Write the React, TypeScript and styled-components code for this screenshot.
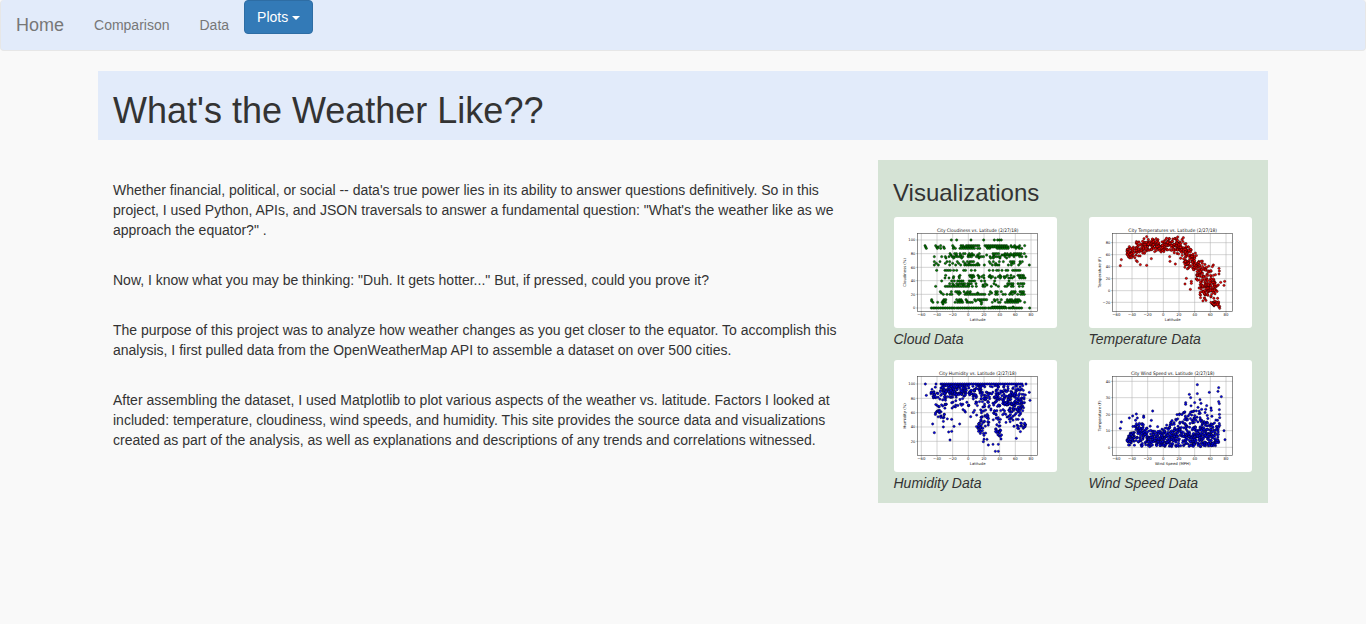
import React from "react";
import styled, { createGlobalStyle } from "styled-components";

const GlobalStyle = createGlobalStyle`
  * { box-sizing: border-box; }
  body {
    margin: 0;
    background: #f9f9f9;
    color: #333;
    font: 14px/20px "Liberation Sans", Arial, sans-serif;
  }
`;

const Navbar = styled.nav`
  display: flex;
  align-items: flex-start;
  height: 51px;
  margin-bottom: 20px;
  background: #e2ebfa;
  border: 1px solid #e7e7e7;
  border-top: 0;
  border-radius: 4px;
`;

const NavLink = styled.a<{ $brand?: boolean }>`
  padding: 15px;
  color: #777;
  font-size: ${(p) => (p.$brand ? 18 : 14)}px;
  line-height: 20px;
  text-decoration: none;
`;

const DropdownButton = styled.button`
  display: flex;
  align-items: center;
  gap: 4px;
  padding: 6px 12px;
  background: #337ab7;
  border: 1px solid #2e6da4;
  border-radius: 4px;
  color: #fff;
  font: inherit;
`;

const Caret = styled.span`
  margin-top: 1px;
  border-top: 4px solid #fff;
  border-right: 4px solid transparent;
  border-left: 4px solid transparent;
`;

const Container = styled.div`
  width: 1170px;
  margin: 0 auto;
`;

const Header = styled.header`
  display: flow-root;
  margin-bottom: 20px;
  padding: 0 15px;
  background: #e2ebfa;
`;

const PageTitle = styled.h1`
  margin: 20px 0 10px;
  font-size: 36px;
  font-weight: 400;
  line-height: 39px;
`;

const Columns = styled.div`
  display: grid;
  grid-template-columns: 780px 390px;
  align-items: start;
`;

const Article = styled.main`
  padding: 20px 40px 0 15px;
`;

const Paragraph = styled.p`
  margin: 0 0 30px;
`;

const Sidebar = styled.aside`
  display: flow-root;
  padding: 0 15px 10.4px;
  background: #d5e3d5;
`;

const SidebarTitle = styled.h3`
  margin: 20px 0 11px;
  font-size: 24px;
  font-weight: 400;
  line-height: 26px;
`;

const Gallery = styled.div`
  display: grid;
  grid-template-columns: 165px 165px;
  column-gap: 30px;
  row-gap: 11.3px;
`;

const Figure = styled.figure`
  margin: 0;
`;

const Thumbnail = styled.svg`
  display: block;
  width: 163px;
  height: 111.33px;
  margin: 0 1px;
  background: #fff;
  border-radius: 3px;
`;

const Caption = styled.figcaption`
  padding: 0.8px 0 0 0.5px;
  font-style: italic;
  line-height: 20px;
`;

const Label = styled.text`
  fill: #111;
  font-family: "DejaVu Sans", sans-serif;
`;

type Point = [number, number];
/** x start, x end, top and bottom at the start, top and bottom at the end, count */
type Band = [number, number, number, number, number, number, number];

function makeRandom(seed: number) {
  let s = seed;
  return () => {
    s = (s * 1664525 + 1013904223) % 4294967296;
    return s / 4294967296;
  };
}

/** Points gather round the middle of each band and thin out past its edges. */
function scatter(bands: Band[], seed: number, minY: number, maxY: number): Point[] {
  const random = makeRandom(seed);
  return bands.flatMap(([x0, x1, t0, b0, t1, b1, n]) =>
    Array.from({ length: n }, (): Point => {
      const k = random();
      const top = t0 + (t1 - t0) * k;
      const bottom = b0 + (b1 - b0) * k;
      const u = (random() + random()) * 0.68 - 0.18;
      const x = x0 + (x1 - x0) * k + (random() - 0.5) * 10;
      const y = Math.min(maxY - random() * 5, Math.max(minY + random() * 5, top + (bottom - top) * u));
      return [Math.min(x, 407), y];
    })
  );
}

/** Rows of equal value: y, then single dots or [from, to] runs. */
type Row = [number, (number | [number, number])[]];

function rows(list: Row[]): Point[] {
  return list.flatMap(([y, items]) =>
    items.flatMap((item): Point[] => {
      if (typeof item === "number") return [[item, y]];
      const out: Point[] = [];
      for (let x = item[0]; x <= item[1]; x += 5.4) out.push([x, y]);
      return out;
    })
  );
}

const cloudPoints = rows([
  [78, [184, 200, 243, [281, 284], 313, [323, 337]]],
  [95, [105, 137, 152, 188, 213, 219, [229, 268], [285, 355], 363, 374, [389, 394], 404]],
  [99, [107, 140, [145, 150], 161, 191, 215, [222, 250], [290, 355], [365, 390]]],
  [103, [109, 142, 152, 163, 190, 196, [210, 254], 263, 269, 293, 299, [322, 355], 378, 388, 395]],
  [119, [180, [194, 200], 210, [220, 226], 238, 246, 268, 309, [315, 328], 345, 352, 362, [372, 395], 403]],
  [123, [183, 199, 212, [235, 252], 263, 290, 312, [336, 392]]],
  [128, [133, 155, 166, 177, [186, 222], [234, 250], [259, 281], 300, [309, 333], 345, 358, 372, 389, 396, 408]],
  [132, [168, 191, 215, 267, 302, 310, 330, 350]],
  [143, [133, 150, 171, 179, 202, 220, 232, [240, 252], 298, 310, 328, 340, [361, 373], 390, 397]],
  [148, [139, 166, 188, 206, 225, 237, 263, 301, 317, 365, 371, 391]],
  [153, [133, 145, 179, 197, [212, 217], [224, 270], 283, 307, [316, 332], 355, 364, 386, 418]],
  [169, [140, [165, 183], 191, 200, [221, 227], 244, 255, 298, 309, [320, 326], 336, [348, 358], [368, 392]]],
  [184, [167, 210, [239, 254], 264, 281, 300, 330, 352, 363, [384, 402]]],
  [188, [191, 207, [241, 253], 267, 275, [297, 309], 325, 333, [342, 352], 372, 389, 400]],
  [192, [165, 177, 190, 208, 246, 267, 282, 303, 316, 331, 344, [356, 372], [389, 406]]],
  [201, [155, 185, 193, [203, 220], [238, 257], 274, 284, 314, 357]],
  [209, [179, 188, 200, [208, 225], [233, 249], 258, 286, 312, [353, 373], 384, [391, 403]]],
  [213, [191, 204, 220, 236, 279, 291, 318, 355, 367]],
  [217, [137, [166, 238], 247, 259, [279, 287], 304, 325, [345, 351], [364, 370], 388, 398]],
  [233, [151, 184, [197, 208], 222, 233, 241, 301, [317, 323], 334, [365, 376], [390, 405]]],
  [237, [154, 203, 211, 229, 239, 263, 305, 319, 362, 374, 398]],
  [241, [160, 171, [180, 190], 207, [225, 287], 298, [317, 327], 339, 346, 359, 367, 383, [392, 408]]],
  [257, [125, [162, 168], 200, [208, 214], 228, 254, [263, 291], 313, 322, 334, 352, [360, 366], [376, 392]]],
  [261, [125, 159, 164, [205, 217], 231, 257, 271, 315, [353, 393]]],
  [265, [129, [143, 148], [156, 170], 195, [202, 223], [231, 249], 275, 307, [325, 335], [346, 387], 404]],
  [270, [274, 159]],
  [279, [[307, 350], 369]],
  [282, [[124, 198], [201, 292], [295, 354], [357, 395], 419]],
]);

const temperaturePoints: Point[] = [
  [103, 155], [106, 137], [151, 140], [154, 143], [163, 152], [182, 154], [196, 134], [251, 128], [252, 142],
  [268, 150], [182, 68], [174, 74], [250, 74], [275, 69], [292, 71], [301, 193], [297, 210], [316, 202], [316, 208],
  [313, 226], [382, 153], [379, 158], [399, 163], [400, 171], [399, 180], [416, 202], [404, 205], [414, 214],
  [397, 213], [130, 98], [137, 131], [401, 283],
  ...scatter([
    [124, 150, 106, 128, 93, 128, 42],
    [150, 185, 84, 125, 78, 112, 62],
    [185, 240, 77, 107, 78, 115, 100],
    [240, 285, 73, 108, 74, 118, 82],
    [280, 303, 85, 120, 90, 154, 48],
    [300, 328, 100, 160, 112, 170, 68],
    [325, 350, 130, 177, 145, 215, 48],
    [342, 367, 160, 245, 165, 255, 68],
    [350, 378, 220, 255, 195, 255, 30],
    [367, 393, 165, 240, 185, 250, 50],
    [377, 402, 264, 274, 260, 282, 30],
  ], 17, 70, 282),
];

const humidityPoints: Point[] = [
  [106, 81], [109, 115], [138, 81], [128, 201], [133, 227], [176, 225], [185, 223], [180, 249], [185, 187],
  [192, 208], [209, 201], [242, 179], [280, 254], [291, 247], [295, 264], [309, 262], [316, 283], [325, 283],
  [325, 262], [379, 244], [418, 106], [420, 130], [160, 210], [408, 81], [226, 165], [250, 166], [219, 158],
  ...rows([[81, [[153, 400]]], [86, [[160, 240], [260, 285], 315, 322, 380, 398]]]),
  ...scatter([
    [123, 150, 93, 125, 90, 124, 20],
    [135, 168, 140, 170, 130, 210, 32],
    [150, 240, 86, 108, 84, 115, 92],
    [150, 230, 100, 132, 100, 150, 38],
    [180, 265, 125, 165, 115, 165, 18],
    [238, 300, 84, 115, 84, 155, 58],
    [260, 290, 180, 240, 160, 238, 36],
    [265, 330, 120, 200, 120, 210, 48],
    [317, 334, 198, 243, 198, 243, 20],
    [300, 348, 84, 135, 88, 150, 52],
    [343, 402, 88, 160, 95, 165, 135],
    [335, 390, 145, 190, 145, 205, 28],
    [380, 404, 200, 228, 185, 218, 18],
  ], 51, 85, 285),
];

const windPoints: Point[] = [
  [106, 195], [103, 214], [130, 183], [151, 171], [140, 177], [154, 183], [173, 177], [173, 181], [200, 162],
  [196, 190], [334, 83], [334, 110], [310, 112], [314, 122], [299, 137], [299, 142], [326, 137], [342, 128],
  [345, 139], [370, 106], [398, 92], [396, 103], [406, 119], [398, 134], [400, 140], [400, 158], [336, 151],
  [347, 157], [362, 146], [375, 153], [376, 160], [359, 157], [414, 221], [417, 248], [401, 182], [281, 171],
  ...scatter([
    [124, 155, 232, 264, 210, 270, 52],
    [145, 172, 187, 225, 194, 240, 26],
    [155, 235, 218, 270, 232, 273, 130],
    [172, 235, 195, 240, 215, 250, 26],
    [235, 300, 218, 273, 205, 272, 120],
    [235, 300, 182, 240, 172, 235, 34],
    [300, 395, 208, 272, 215, 272, 210],
    [295, 355, 155, 220, 155, 225, 55],
    [355, 402, 170, 230, 175, 245, 40],
  ], 91, 75, 269),
];

interface ChartProps {
  left: number;
  title: string;
  titleWidth: number;
  xLabel: string;
  yLabel: string;
  color: string;
  bottom: number;
  ticks: [string, number][];
  points: Point[];
}

/** Scatter plot drawn in units of a third of a pixel. */
function Chart({ left, title, titleWidth, xLabel, yLabel, color, bottom, ticks, points }: ChartProps) {
  const frameLeft = left + 71;
  const frameWidth = 360;
  const middle = frameLeft + frameWidth / 2;
  const columns = [-60, -40, -20, 0, 20, 40, 60, 80].map((v, i): [number, number] => [v, left + 82 + i * 47]);
  return (
    <Thumbnail viewBox={`${left} 9 489 334`} preserveAspectRatio="none" role="img" aria-label={title}>
      <Label
        x={middle}
        y={53}
        fontSize={14}
        textAnchor="middle"
        textLength={titleWidth}
        lengthAdjust="spacingAndGlyphs"
      >
        {title}
      </Label>
      {columns.map(([v, x]) => (
        <g key={v}>
          <path d={`M${x} 58V${bottom}`} stroke="#b0b0b0" strokeWidth={1.6} />
          <path d={`M${x} ${bottom}v4`} stroke="#333" strokeWidth={1.2} />
          <Label x={x} y={bottom + 15} fontSize={11.5} textAnchor="middle">{String(v).replace("-", "−")}</Label>
        </g>
      ))}
      {ticks.map(([text, y]) => (
        <g key={text}>
          <path d={`M${frameLeft} ${y}h${frameWidth}`} stroke="#b0b0b0" strokeWidth={1.6} />
          <path d={`M${frameLeft - 4} ${y}h4`} stroke="#333" strokeWidth={1.2} />
          <Label x={frameLeft - 7} y={y + 4} fontSize={11} textAnchor="end">{text}</Label>
        </g>
      ))}
      {points.map(([x, y], i) => (
        <circle key={i} cx={x} cy={y} r={3.5} fill={color} stroke="#000" strokeWidth={1.2} />
      ))}
      <rect x={frameLeft} y={58} width={frameWidth} height={bottom - 58} fill="none" stroke="#444" strokeWidth={1.8} />
      <Label x={middle} y={bottom + 30} fontSize={11.5} textAnchor="middle">{xLabel}</Label>
      <Label
        transform={`translate(${left + 36} ${(58 + bottom) / 2}) rotate(-90)`}
        fontSize={11.5}
        textAnchor="middle"
      >
        {yLabel}
      </Label>
    </Thumbnail>
  );
}

const charts: (ChartProps & { caption: string })[] = [
  {
    caption: "Cloud Data", left: 12, title: "City Cloudiness vs. Latitude (2/27/18)", titleWidth: 244,
    xLabel: "Latitude", yLabel: "Cloudiness (%)", color: "#008000", bottom: 292, points: cloudPoints,
    ticks: [["100", 78], ["80", 119], ["60", 160], ["40", 200], ["20", 241], ["0", 282]],
  },
  {
    caption: "Temperature Data", left: 9, title: "City Temperatures vs. Latitude (2/27/18)", titleWidth: 266,
    xLabel: "Latitude", yLabel: "Temperature (F)", color: "#f00000", bottom: 292, points: temperaturePoints,
    ticks: [["80", 86], ["60", 122], ["40", 158], ["20", 194], ["0", 230], ["−20", 265]],
  },
  {
    caption: "Humidity Data", left: 12, title: "City Humidity vs. Latitude (2/27/18)", titleWidth: 232,
    xLabel: "Latitude", yLabel: "Humidity (%)", color: "#0000f0", bottom: 295, points: humidityPoints,
    ticks: [["100", 81], ["80", 124], ["60", 167], ["40", 210], ["20", 253]],
  },
  {
    caption: "Wind Speed Data", left: 9, title: "City Wind Speed vs. Latitude (2/27/18)", titleWidth: 250,
    xLabel: "Wind Speed (MPH)", yLabel: "Temperature (F)", color: "#0000f0", bottom: 295, points: windPoints,
    ticks: [["40", 73], ["30", 122], ["20", 172], ["10", 221], ["0", 271]],
  },
];

export default function App() {
  return (
    <>
      <GlobalStyle />
      <Navbar>
        <NavLink $brand>Home</NavLink>
        <NavLink>Comparison</NavLink>
        <NavLink>Data</NavLink>
        <DropdownButton>Plots <Caret /></DropdownButton>
      </Navbar>
      <Container>
        <Header>
          <PageTitle>What's the Weather Like??</PageTitle>
        </Header>
        <Columns>
          <Article>
            <Paragraph>
              Whether financial, political, or social -- data's true power lies in its ability to answer questions
              definitively. So in this project, I used Python, APIs, and JSON traversals to answer a fundamental
              question: "What's the weather like as we approach the equator?" .
            </Paragraph>
            <Paragraph>
              Now, I know what you may be thinking: "Duh. It gets hotter..." But, if pressed, could you prove it?
            </Paragraph>
            <Paragraph>
              The purpose of this project was to analyze how weather changes as you get closer to the equator. To
              accomplish this analysis, I first pulled data from the OpenWeatherMap API to assemble a dataset on over
              500 cities.
            </Paragraph>
            <Paragraph>
              After assembling the dataset, I used Matplotlib to plot various aspects of the weather vs. latitude.
              Factors I looked at included: temperature, cloudiness, wind speeds, and humidity. This site provides the
              source data and visualizations created as part of the analysis, as well as explanations and descriptions
              of any trends and correlations witnessed.
            </Paragraph>
          </Article>
          <Sidebar>
            <SidebarTitle>Visualizations</SidebarTitle>
            <Gallery>
              {charts.map(({ caption, ...chart }) => (
                <Figure key={caption}>
                  <Chart {...chart} />
                  <Caption>{caption}</Caption>
                </Figure>
              ))}
            </Gallery>
          </Sidebar>
        </Columns>
      </Container>
    </>
  );
}
